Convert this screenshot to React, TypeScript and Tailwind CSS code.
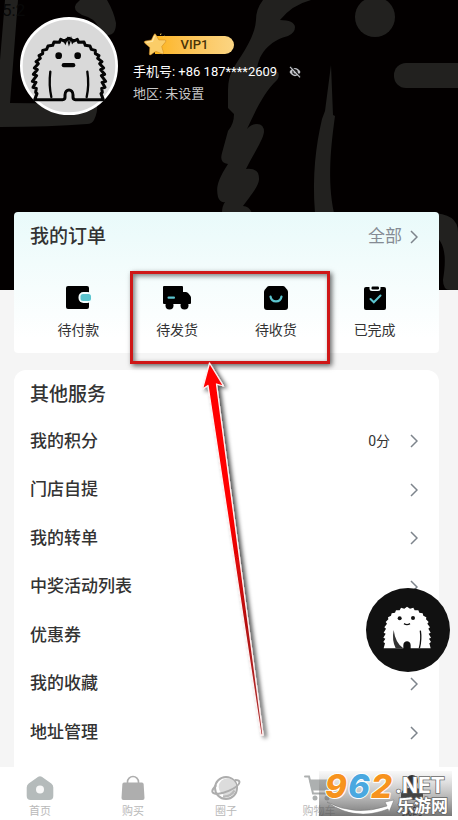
const orders = [
  { label: "待付款", icon: <WalletIcon /> },
  { label: "待发货", icon: <TruckIcon /> },
  { label: "待收货", icon: <BagIcon /> },
  { label: "已完成", icon: <ClipboardIcon /> },
];

const services = [
  { label: "我的积分", value: "0分" },
  { label: "门店自提" },
  { label: "我的转单" },
  { label: "中奖活动列表" },
  { label: "优惠券" },
  { label: "我的收藏" },
  { label: "地址管理" },
];

const tabs = [
  { label: "首页", icon: <HomeIcon /> },
  { label: "购买", icon: <ShopIcon /> },
  { label: "圈子", icon: <PlanetIcon /> },
  { label: "购物车", icon: <CartIcon /> },
  { label: "我的", icon: <MeIcon />, active: true },
];

function WalletIcon() {
  return (
    <svg viewBox="0 0 28 26" className="h-[26px] w-7">
      <rect x="2" y="1" width="23" height="23" rx="2" fill="#000" />
      <rect x="14.500" y="7" width="14" height="11" rx="5" fill="#f4fefe" />
      <rect x="16.500" y="9" width="10.500" height="7" rx="2.500" fill="#5cc5cf" />
    </svg>
  );
}

function TruckIcon() {
  return (
    <svg viewBox="0 0 28 26" className="h-[26px] w-7">
      <path
        d="M1 1h18q1 0 1 1v5h3q1.500 0 2.500 1.500l1.800 2.200q.7.800.7 2V18q0 1-1 1H1q-1 0-1-1V2q0-1 1-1z"
        fill="#000"
      />
      <circle cx="6.500" cy="20.500" r="4" fill="#000" />
      <circle cx="21.500" cy="20.500" r="4" fill="#000" />
      <rect x="4.500" y="11.500" width="7.500" height="2.300" rx="1" fill="#5cc5cf" />
    </svg>
  );
}

function BagIcon() {
  return (
    <svg viewBox="0 0 28 26" className="h-[26px] w-7">
      <path
        d="M7 1h14q1 0 1.700.8L25 4.500q1 1.200 1 2.500v15q0 3-3 3H5q-3 0-3-3V7q0-1.300 1-2.500l2.300-2.700Q6 1 7 1z"
        fill="#000"
      />
      <path d="M8.500 11.500c1 6.500 10 6.500 11 0" fill="none" stroke="#5cc5cf" strokeWidth="2.200" strokeLinecap="round" />
    </svg>
  );
}

function ClipboardIcon() {
  return (
    <svg viewBox="0 0 28 26" className="h-[26px] w-7">
      <rect x="3" y="2" width="22" height="23" rx="2" fill="#000" />
      <path d="M8.500 0h11v3.500q0 2.500-2.500 2.500h-6q-2.500 0-2.500-2.500z" fill="#f4fefe" />
      <rect x="10.500" y="1.500" width="7.500" height="3" rx="1.200" fill="#000" />
      <path d="M9.500 14l3.300 3.300 6.700-6.800" fill="none" stroke="#5cc5cf" strokeWidth="2" strokeLinecap="round" />
    </svg>
  );
}

function HomeIcon() {
  return (
    <svg viewBox="0 0 30 28" className="h-7 w-[30px]">
      <path
        d="M13.200 2.800q1.800-1.300 3.600 0l9.500 6.800q2 1.400 2 3.800v8.600q0 4-4 4H5.700q-4 0-4-4v-8.600q0-2.400 2-3.800z"
        fill="#b5bbbb"
      />
      <circle cx="15" cy="15.500" r="4" fill="#f8f8f8" />
    </svg>
  );
}

function ShopIcon() {
  return (
    <svg viewBox="0 0 30 28" className="h-7 w-[30px]">
      <path d="M9.500 9.500V8a5.500 5.500 0 0 1 11 0v1.500" fill="none" stroke="#aeaeae" strokeWidth="1.600" />
      <path d="M6 8.500h18q1.500 0 1.600 1.500l.9 14q.1 2-2 2h-19q-2.100 0-2-2l.9-14q.1-1.500 1.600-1.500z" fill="#aeaeae" />
    </svg>
  );
}

function PlanetIcon() {
  return (
    <svg viewBox="0 0 30 28" className="h-7 w-[30px]">
      <circle cx="15" cy="14" r="11" fill="#fff" stroke="#adadad" strokeWidth="2" />
      <circle cx="16.500" cy="13" r="8.800" fill="#dcdcdc" />
      <path
        d="M4.500 12C2 14.500.8 16.800 1.600 18.200c1.600 2.600 9 1.800 16-1.300 6.500-2.900 11-6.600 10.900-8.900-.1-1.500-1.800-2-4-2"
        fill="none"
        stroke="#adadad"
        strokeWidth="2"
        strokeLinecap="round"
      />
      <path d="M12 22.500c4.500.3 9-1.500 11.500-6" fill="none" stroke="#b8b8b8" strokeWidth="2.500" />
    </svg>
  );
}

function CartIcon() {
  return (
    <svg viewBox="0 0 30 28" className="h-7 w-[30px]">
      <path d="M1 2.500h4l4 17h17" fill="none" stroke="#adb0b0" strokeWidth="2" strokeLinecap="round" />
      <path d="M5 5.500h23.500l-3 11H8z" fill="#adb0b0" />
      <circle cx="11" cy="24" r="2.500" fill="#adb0b0" />
      <circle cx="23" cy="24" r="2.500" fill="#adb0b0" />
    </svg>
  );
}

function MeIcon() {
  return (
    <svg viewBox="0 0 30 28" className="h-7 w-[30px]">
      <circle cx="15" cy="7" r="6" fill="#222" />
      <path d="M4 26v-4q0-8 8-8h6q8 0 8 8v4z" fill="#222" />
    </svg>
  );
}

function Chevron() {
  return (
    <svg viewBox="0 0 8 14" className="h-3.5 w-2">
      <path d="M1 1l6 6-6 6" fill="none" stroke="#7d848c" strokeWidth="1.500" />
    </svg>
  );
}

/* furry mascot, used in the avatar */
function Avatar() {
  return (
    <svg viewBox="60 50 294 294" className="size-[98px] shrink-0">
      <circle cx="207" cy="197" r="143" fill="#d9d9d9" stroke="#fff" strokeWidth="8" />
      <path
        d="M207 114L222 122L232 117L236 126L252 125L256 135L270 137L274 147L286 150L286 160L297 166L293 174L306 184L299 190L311 203L302 208L314 222L304 226L317 243L306 246L315 261L305 264L307 276L303 280L310 298H226Q219 298 219 291V284C219 264 195 264 195 284V291Q195 298 188 298H104L111 280L107 276L109 264L99 261L108 246L97 243L110 226L100 222L112 208L103 203L115 190L108 184L121 174L117 166L128 160L128 150L140 147L144 137L158 135L162 125L178 126L182 117L192 122z"
        fill="#d9d9d9"
        stroke="#050505"
        strokeWidth="9"
        strokeLinejoin="round"
      />
      <path d="M190 118l6 12 6-16 5 18 6-18 4 14 8-10" fill="none" stroke="#050505" strokeWidth="4" />
      <path d="M151 214q-5 40 3 76M262 214q6 40-2 76" fill="none" stroke="#050505" strokeWidth="7" strokeLinecap="round" />
      <circle cx="176" cy="166" r="10" fill="#050505" />
      <circle cx="233" cy="166" r="10" fill="#050505" />
      <rect x="185" y="188" width="41" height="13" rx="6" fill="#050505" />
    </svg>
  );
}

function FloatingMascot() {
  return (
    <svg viewBox="48 54 252 252" className="size-[84px]">
      <circle cx="174" cy="180" r="126" fill="#111" />
      <path
        d="M171 110L180 116L190 113L194 121L205 121L208 128L218 130L220 137L229 142L228 148L236 156L232 161L240 172L235 176L242 188L236 191L243 203L237 206L243 216L238 220L242 235H182V226C182 210 160 210 160 226V235H101L105 220L100 216L106 206L100 203L107 191L101 188L108 176L103 172L111 161L107 156L115 148L114 142L123 137L125 130L135 128L138 121L149 121L153 113L163 116z"
        fill="#fff"
      />
      <path d="M131 180q-6 30 6 55h23q-24-16-29-55z" fill="#333" />
      <path d="M211 182q4 26-3 53" fill="none" stroke="#111" strokeWidth="4" />
      <circle cx="149" cy="145" r="6" fill="#111" />
      <circle cx="189" cy="144" r="6" fill="#111" />
      <path d="M162 161q9 6 18 0" fill="none" stroke="#111" strokeWidth="4" />
    </svg>
  );
}

function HeaderArt() {
  return (
    <svg viewBox="0 0 458 290" preserveAspectRatio="xMidYMid slice" className="h-full w-full" fill="#22211f">
      <path d="M5 0H18L10 103L97 104Q98 112 94 120Q92 124 87 124Q50 127 0 127V60z" />
      <path d="M80 0H107Q114 12 116 23Q116 35 108 35Q103 34 99 28Q95 18 82 15Q72 10 76 4z" />
      <path d="M263 0Q256 9 256 20C255 38 240 57 233 69Q228 78 228 90V108L234 114Q234 124 228 131L222 153Q219 163 228 164C217 181 216 188 218 197Q220 203 225 202Q222 206 222 213H252Q249 206 243 206C258 186 261 182 258 173Q255 168 246 169C254 153 263 140 264 132Q264 124 257 124Q251 124 247 129C256 110 264 92 277 80Q280 76 278 72L257 71C258 50 275 39 288 36Q295 33 295 27Q294 20 280 20Q292 5 311 0z" />
      <circle cx="375" cy="17" r="20" />
      <rect x="394" y="63" width="90" height="25" rx="12" />
      <path d="M331 65L333 115L335 116C331 145 327 180 334 213H315C312 175 316 145 322 119L325 111z" />
      <path d="M430 213Q458 213 458 232V290H450Q443 290 443 280C447 255 445 240 430 232z" />
    </svg>
  );
}

function Star() {
  return (
    <svg viewBox="0 0 24 24" className="relative z-10 size-6">
      <path
        d="M11 1.500q1-1.500 2 .2l2.800 5.200 6 .1q2 .3.700 2l-3.800 4.600 1.800 6q.3 2-1.600 1.200l-6-2.500-5 3.500q-1.700.8-1.600-1.100l.5-6.200L1.600 10q-1.200-1.500.700-2l6-1.100z"
        fill="#fbcd68"
        stroke="#c8831c"
        strokeWidth="0.500"
      />
      <path d="M11.500 3l-2 5.300-6 1" fill="none" stroke="#ffe6a3" strokeWidth="1.200" />
      <path d="M17.500 2l.5-1.500M20 4l1.500-1" stroke="#f3c65c" />
    </svg>
  );
}

function EyeOff() {
  return (
    <svg viewBox="0 0 12 12" className="size-3">
      <path d="M.5 6C3.500.5 8.500.5 11.500 6 8.500 11.500 3.500 11.500.5 6z" fill="#c4c5ca" />
      <circle cx="6" cy="6" r="2.700" fill="#111" />
      <circle cx="6" cy="6" r="1.500" fill="#c4c5ca" />
      <path d="M2 .5l9.500 10" stroke="#111" strokeWidth="1.400" />
      <path d="M1 .8l10 10.500" stroke="#c4c5ca" strokeWidth="1.200" />
    </svg>
  );
}

function Watermark() {
  return (
    <svg viewBox="0 0 133 45" className="h-[45px] w-[133px] overflow-visible">
      <defs>
        <linearGradient id="fade" x1="0" y1="0" x2="0" y2="1">
          <stop offset="0" stopColor="#888" stopOpacity="0.05" />
          <stop offset="1" stopColor="#555" stopOpacity="0.8" />
        </linearGradient>
      </defs>
      <rect width="133" height="45" fill="url(#fade)" />
      <path d="M8 31Q36 46 68 35L66 31L75 29L70 41L69 38Q36 51 8 31z" fill="#fff" stroke="#777" strokeWidth="0.500" />
      <g
        stroke="#fff"
        strokeWidth="2"
        paintOrder="stroke"
        strokeLinejoin="round"
        fontSize="33"
        fontWeight="800"
        fontStyle="italic"
        fontFamily="Inter, sans-serif"
      >
        <text x="6" y="27" fill="#f7931e">9</text>
        <text x="29" y="27" fill="#4aa8e0">6</text>
        <text x="52" y="27" fill="#f7931e">2</text>
      </g>
      <g fill="#fff" stroke="#666" strokeWidth="1.500" paintOrder="stroke">
        <text x="76" y="22" fontSize="21" fontWeight="700" fontFamily="Inter, sans-serif">.NET</text>
        <text x="78" y="41" fontSize="17" fontWeight="700" fontFamily="'Noto Sans CJK SC', sans-serif">乐游网</text>
      </g>
    </svg>
  );
}

export default function App() {
  return (
    <div className="relative flex min-h-screen flex-col overflow-hidden bg-[#f5f5f5] font-[Roboto,'Noto_Sans_CJK_SC',sans-serif] text-[#333]">

      {/* HEADER BACKGROUND */}
      <div className="absolute inset-x-0 top-0 h-[290px] bg-[#030000]">
        <HeaderArt />
        <span className="absolute top-0 left-0.5 text-[17px] leading-5 text-[#080808]">5:2</span>
      </div>

      {/* PROFILE */}
      <header className="relative flex h-[212px] items-start gap-[15px] pt-[17px] pl-5 text-white">
        <Avatar />
        <div className="pt-4">
          <div className="flex h-6 items-center pl-2.5">
            <Star />
            <span className="-ml-3 flex h-[18px] w-[79px] items-center justify-center rounded-r-full bg-linear-to-r from-[#fdb515] to-[#fbd583] text-[13px] font-medium text-[#4a3408]">
              VIP1
            </span>
          </div>
          <p className="mt-1 flex items-center gap-3 text-[13px] leading-[22px]">
            手机号: +86 187****2609
            <button aria-label="显示手机号"><EyeOff /></button>
          </p>
          <p className="text-[13px] leading-[22px] text-[#c9c9c9]">地区: 未设置</p>
        </div>
      </header>

      {/* ORDERS */}
      <section className="relative mr-[19px] ml-3.5 rounded bg-linear-to-b from-[#e9fafa] to-white to-90% pb-3">
        <div className="flex h-[50px] items-center justify-between pr-[21px] pl-4">
          <h2 className="text-[19px] font-medium">我的订单</h2>
          <a href="#orders" className="flex items-center gap-2 text-[17px] text-[#858b94]">
            全部 <Chevron />
          </a>
        </div>
        <div className="grid grid-cols-4 px-[15px] pt-[23px]">
          {orders.map((item) => (
            <button key={item.label} className="flex flex-col items-center gap-2 text-sm leading-[22px]">
              {item.icon}
              {item.label}
            </button>
          ))}
        </div>
      </section>

      {/* SERVICES */}
      <section className="mt-[17px] mr-[19px] ml-3.5 flex flex-1 flex-col rounded-t-xl bg-white pb-2.5">
        <h2 className="h-[47px] pt-[11px] pl-4 text-[19px] leading-7 font-medium">其他服务</h2>
        <ul className="flex flex-1 flex-col">
          {services.map((item) => (
            <li key={item.label} className="flex flex-1">
              <a href="#service" className="flex flex-1 items-center justify-between py-2 pr-[21px] pl-4">
                <span className="text-[17px] font-medium">{item.label}</span>
                <span className="flex items-center gap-5 text-sm">
                  {item.value}
                  <Chevron />
                </span>
              </a>
            </li>
          ))}
        </ul>
      </section>

      {/* TAB BAR */}
      <nav className="relative flex h-[53px] justify-between bg-white pt-[7px] pr-3.5 pl-2">
        {tabs.map((tab) => (
          <a key={tab.label} href="#tab" className="flex w-16 flex-col items-center gap-[3px] text-[11px] leading-[14px]">
            {tab.icon}
            <span className={tab.active ? "font-medium text-black" : "text-[#b9b9b9]"}>{tab.label}</span>
          </a>
        ))}
        <div className="pointer-events-none absolute right-1.5 bottom-1">
          <Watermark />
        </div>
      </nav>

      {/* FLOATING BUTTON */}
      <button aria-label="客服" className="absolute right-2 bottom-[148px]">
        <FloatingMascot />
      </button>

      {/* HIGHLIGHT BOX + ARROW */}
      <div className="pointer-events-none absolute top-[271px] left-[130px] h-[93px] w-[200px] border-[3px] border-[#cf1717] shadow-[2px_2px_5px_rgba(0,0,0,0.6),inset_2px_2px_5px_rgba(0,0,0,0.5)]" />
      <svg viewBox="0 0 80 390" className="pointer-events-none absolute top-[358px] left-[195px] h-[390px] w-20">
        <defs>
          <linearGradient id="arrow" x1="0" y1="0" x2="0" y2="1">
            <stop offset="0.4" stopColor="#f00" />
            <stop offset="0.7" stopColor="#b51010" />
            <stop offset="1" stopColor="#a33" />
          </linearGradient>
          <filter id="shade" x="-50%" y="-5%" width="200%" height="110%">
            <feDropShadow dx="3" dy="2" stdDeviation="2" floodColor="#000" floodOpacity="0.7" />
          </filter>
        </defs>
        <path
          d="M14.500 5L28.500 28L21.500 26L68 377H66L13 27.500L7.500 31z"
          fill="url(#arrow)"
          stroke="#fff0f0"
          strokeWidth="1.300"
          strokeLinejoin="round"
          filter="url(#shade)"
        />
      </svg>
    </div>
  );
}
